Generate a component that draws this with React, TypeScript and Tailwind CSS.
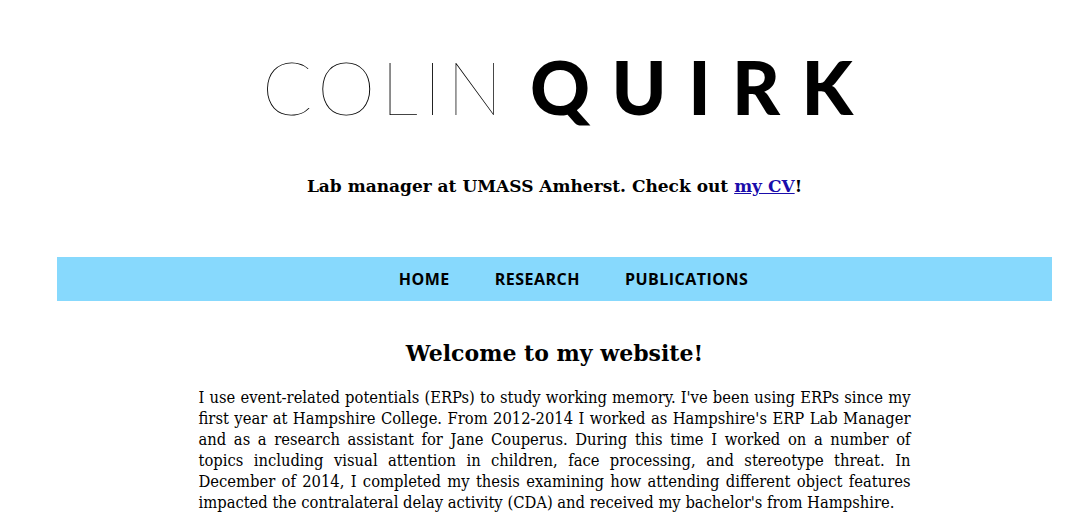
const lines = [
  "I use event-related potentials (ERPs) to study working memory. I've been using ERPs since my",
  "first year at Hampshire College. From 2012-2014 I worked as Hampshire's ERP Lab Manager",
  "and as a research assistant for Jane Couperus. During this time I worked on a number of",
  "topics including visual attention in children, face processing, and stereotype threat. In",
  "December of 2014, I completed my thesis examining how attending different object features",
  "impacted the contralateral delay activity (CDA) and received my bachelor's from Hampshire.",
];

export default function App() {
  return (
    <div className="min-h-[526px] bg-white pl-[57px] pr-[32px] text-black">
      <header className="flex flex-col items-center pt-[50px]">
        <h1 className="flex items-baseline pl-[6px] text-[74px] leading-[74px] font-['Lato',sans-serif]">
          <span className="font-thin tracking-[0.075em]">COLIN</span>
          <span className="ml-[22px] mr-[-0.29em] font-black tracking-[0.29em]">QUIRK</span>
        </h1>
        <p className="mt-[50px] text-[17px] font-bold font-['DejaVu_Serif',serif]">
          Lab manager at UMASS Amherst. Check out{" "}
          <a href="#" className="text-[#1a0dab] underline">my CV</a>!
        </p>
      </header>

      <nav className="mt-[57px] flex h-[44px] items-center justify-center gap-[45px] bg-[#87d9fd] pl-[38px] text-[16px] font-bold tracking-[0.03em] font-['Open_Sans',sans-serif]">
        <a href="#">HOME</a>
        <a href="#">RESEARCH</a>
        <a href="#">PUBLICATIONS</a>
      </nav>

      <main className="mx-auto w-[712px] pt-[37px] font-['DejaVu_Serif',serif]">
        <h2 className="text-center text-[22px] leading-[30px] font-bold">Welcome to my website!</h2>
        <div className="mt-[19px] text-[16.4px] leading-[21px] [font-stretch:condensed]">
          {lines.map((l, i) => (
            <p
              key={i}
              className={i < lines.length - 1 ? "whitespace-nowrap text-justify [text-align-last:justify]" : "whitespace-nowrap text-left"}
            >
              {l}
            </p>
          ))}
        </div>
      </main>
    </div>
  );
}
